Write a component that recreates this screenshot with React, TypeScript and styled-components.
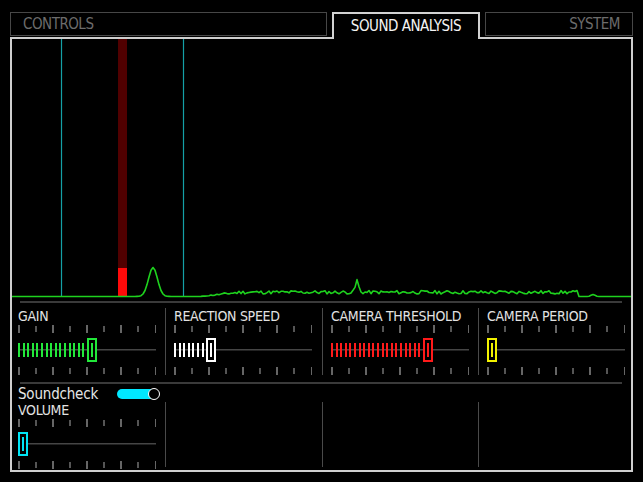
import React from "react";
import styled, { createGlobalStyle } from "styled-components";

const FONT = `"DejaVu Sans Condensed", "DejaVu Sans", sans-serif`;

const GlobalStyle = createGlobalStyle`
  html, body {
    margin: 0;
    background: #000;
  }
`;

// spectrum line, made once
const curvePath = (() => {
  let seed = 11;
  const rand = () => {
    seed = (seed * 9301 + 49297) % 233280;
    return seed / 233280;
  };
  const pts: string[] = [];
  for (let x = 11; x <= 631; x += 2) {
    let y = 296.5;
    y -= 29 * Math.exp(-((x - 153) ** 2) / (2 * 4.5 ** 2));
    if (x > 200 && x < 578) {
      const ramp = Math.min(1, (x - 200) / 40);
      y -= ramp * (2.5 + rand() * 3.5);
    }
    y -= 12 * Math.exp(-((x - 357) ** 2) / 4.5);
    y -= 2 * Math.exp(-((x - 593) ** 2) / 8);
    pts.push(`${x},${y.toFixed(1)}`);
  }
  return "M" + pts.join(" L");
})();

export default function App() {
  return (
    <>
      <GlobalStyle />
      <Screen>
        <TabBar>
          <Tab $width={317} $align="flex-start">CONTROLS</Tab>
          <Tab $width={148} $align="center" $active>SOUND ANALYSIS</Tab>
          <Tab $width={148} $align="flex-end">SYSTEM</Tab>
        </TabBar>
        <Frame>
          <Chart width={619} height={259} viewBox="12 39 619 259">
            <line x1={61.5} y1={39} x2={61.5} y2={296} stroke="#14a0a6" strokeWidth={1.2} />
            <line x1={183.5} y1={39} x2={183.5} y2={296} stroke="#14a0a6" strokeWidth={1.2} />
            <rect x={118} y={39} width={9} height={229} fill="#500000" />
            <rect x={118} y={268} width={9} height={28.5} fill="#ff0a0a" />
            <path d={curvePath} fill="none" stroke="#1ed21e" strokeWidth={1.6} strokeLinejoin="round" />
          </Chart>
          <Rule />
          <Row>
            <Panel $first>
              <Label>GAIN</Label>
              <Slider color="#22e83a" bars={15} />
            </Panel>
            <Panel>
              <Label>REACTION SPEED</Label>
              <Slider color="#ffffff" bars={7} />
            </Panel>
            <Panel>
              <Label>CAMERA THRESHOLD</Label>
              <Slider color="#ff1a1a" bars={20} />
            </Panel>
            <Panel>
              <Label>CAMERA PERIOD</Label>
              <Slider color="#f2f200" bars={0} />
            </Panel>
          </Row>
          <Rule />
          <Row>
            <Panel $first $lower>
              <SoundRow>
                <span>Soundcheck</span>
                <Pill>
                  <Knob />
                </Pill>
              </SoundRow>
              <Label>VOLUME</Label>
              <Slider color="#00e5f5" bars={0} />
            </Panel>
            <EmptyPanel />
            <EmptyPanel />
            <EmptyPanel />
          </Row>
        </Frame>
      </Screen>
    </>
  );
}

const Slider = ({ color, bars }: { color: string; bars: number }) => {
  const ticks = Array.from({ length: 9 });
  return (
    <SliderBox>
      <Ticks>
        {ticks.map((_, i) => (
          <Tick key={i} $tall={i % 2 === 0} />
        ))}
      </Ticks>
      <Track>
        {Array.from({ length: bars }).map((_, i) => (
          <Bar key={i} $color={color} />
        ))}
        <Thumb $color={color}>
          <Grip $color={color} />
        </Thumb>
      </Track>
      <Ticks>
        {ticks.map((_, i) => (
          <Tick key={i} $tall={i % 2 === 0} />
        ))}
      </Ticks>
    </SliderBox>
  );
};

const Screen = styled.div`
  width: 643px;
  height: 482px;
  box-sizing: border-box;
  padding: 12px 10px 0 10px;
  background: #000;
  font-family: ${FONT};
  font-stretch: condensed;
`;

const TabBar = styled.div`
  display: flex;
  align-items: flex-start;
  gap: 5px;
  height: 25px;
`;

const Tab = styled.div<{ $width: number; $align: string; $active?: boolean }>`
  box-sizing: border-box;
  width: ${(p) => p.$width}px;
  height: ${(p) => (p.$active ? 27 : 24)}px;
  display: flex;
  align-items: center;
  justify-content: ${(p) => p.$align};
  padding: ${(p) => (p.$active ? "0 0 2px" : "0 12px")};
  border: ${(p) => (p.$active ? "2px solid #d2d2d2" : "1px solid #474747")};
  border-bottom: ${(p) => (p.$active ? "none" : "1px solid #474747")};
  background: #000;
  position: relative;
  z-index: ${(p) => (p.$active ? 1 : 0)};
  color: ${(p) => (p.$active ? "#f4f4f4" : "#6c6c6c")};
  font-size: 15px;
  letter-spacing: -0.5px;
`;

const Frame = styled.div`
  box-sizing: border-box;
  height: 435px;
  border: 2px solid #cfcfcf;
  display: flex;
  flex-direction: column;
`;

const Chart = styled.svg`
  display: block;
  flex: none;
`;

const Rule = styled.div`
  flex: none;
  height: 2px;
  margin: 3px 9px 0 8px;
  background: #3a3a3a;
`;

const Row = styled.div`
  display: grid;
  grid-template-columns: 153px 157px 156px 1fr;
  align-items: start;
  height: 76px;
`;

const Panel = styled.div<{ $first?: boolean; $lower?: boolean }>`
  margin-top: ${(p) => (p.$lower ? 3 : 5)}px;
  padding-left: ${(p) => (p.$first ? 6 : 8)}px;
  border-left: ${(p) => (p.$first ? "none" : "1.5px solid #4a4a4a")};
  height: ${(p) => (p.$lower ? "auto" : "67px")};
`;

const EmptyPanel = styled.div`
  margin-top: 18px;
  height: 65px;
  border-left: 1.5px solid #4a4a4a;
`;

const Label = styled.div`
  color: #e2e2e2;
  font-size: 14px;
  line-height: 16px;
  letter-spacing: -0.3px;
  white-space: nowrap;
`;

const SoundRow = styled.div`
  display: flex;
  align-items: center;
  gap: 19px;
  height: 14px;
  line-height: 14px;
  margin-bottom: 1px;
  color: #e6e6e6;
  font-size: 15px;
  letter-spacing: -0.2px;
`;

const Pill = styled.div`
  width: 42px;
  height: 10px;
  border-radius: 5px;
  background: #00e8ff;
  display: flex;
  align-items: center;
  justify-content: flex-end;
`;

const Knob = styled.div`
  box-sizing: border-box;
  width: 12px;
  height: 12px;
  margin-right: -1px;
  border-radius: 50%;
  border: 1.5px solid #fff;
  background: #000;
`;

const SliderBox = styled.div`
  width: 138px;
  display: flex;
  flex-direction: column;
  gap: 5px;
  margin-top: 1px;
`;

const Ticks = styled.div`
  display: flex;
  justify-content: space-between;
  align-items: center;
  height: 8px;
`;

const Tick = styled.div<{ $tall: boolean }>`
  width: 1.5px;
  height: ${(p) => (p.$tall ? 8 : 6)}px;
  background: ${(p) => (p.$tall ? "#666" : "#555")};
`;

const Track = styled.div`
  display: flex;
  align-items: center;
  gap: 2.6px;
  height: 24px;
  background: linear-gradient(#454545, #454545) no-repeat center / 100% 1.5px;
`;

const Bar = styled.div<{ $color: string }>`
  width: 2px;
  height: 14px;
  background: ${(p) => p.$color};
`;

const Thumb = styled.div<{ $color: string }>`
  box-sizing: border-box;
  width: 10px;
  height: 24px;
  border: 2px solid ${(p) => p.$color};
  background: #000;
  display: flex;
  align-items: center;
  justify-content: center;
`;

const Grip = styled.div<{ $color: string }>`
  width: 2px;
  height: 14px;
  background: ${(p) => p.$color};
`;
